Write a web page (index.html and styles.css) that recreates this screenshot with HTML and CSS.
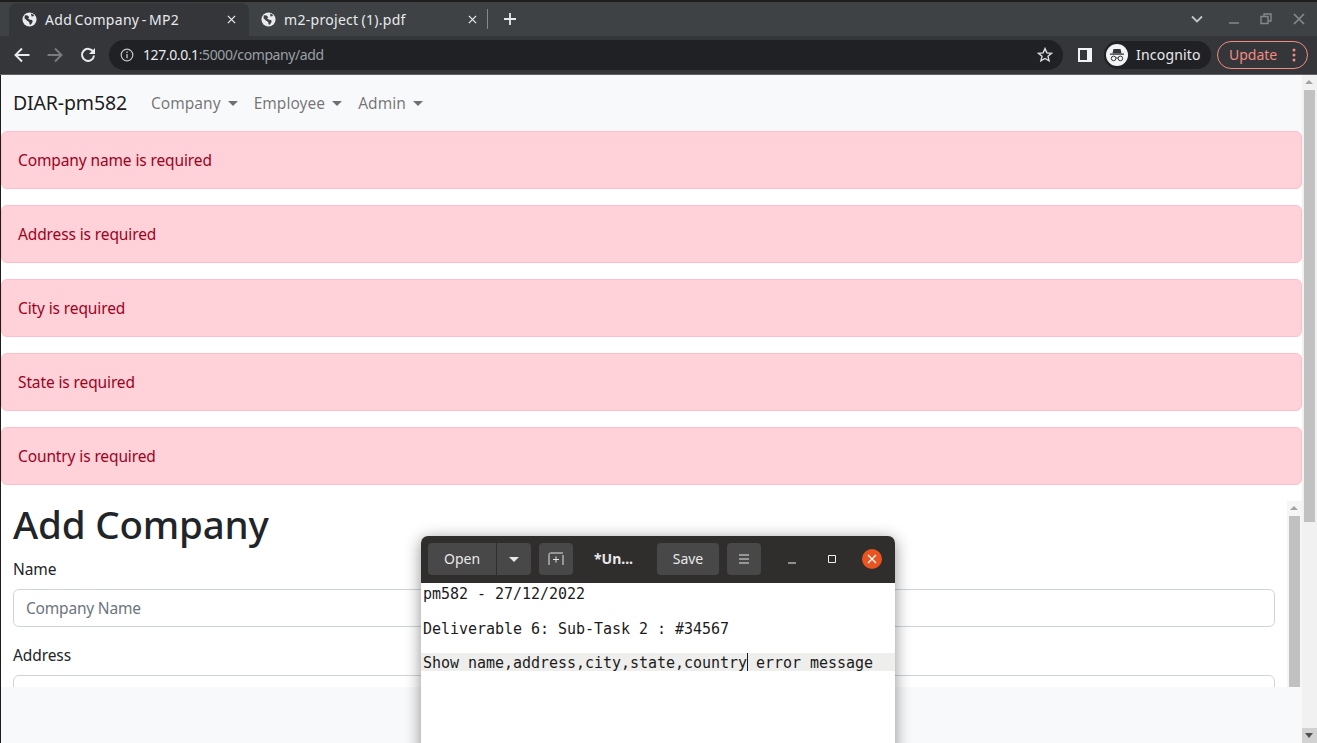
FILE: index.html
```html
<!DOCTYPE html>
<html lang="en">

<head>
  <meta charset="UTF-8">
  <meta name="viewport" content="width=device-width, initial-scale=1.0">
  <title>Add Company - MP2</title>
  <link rel="stylesheet" href="styles.css">
</head>

<body>
  <div class="screen">
    <div class="tabstrip">
      <div class="tab tab-active">
        <svg class="globe" viewBox="0 0 16 16"><circle cx="8" cy="8" r="7.5" fill="#e8eaed"/><path d="M3 3.5l3 .3 1.6 1.5-1 1.6 2 1.3 2.2.2.6 2-2 3.2-1.4-.6-.3-2.4-2.2-1.4-2.8-2.6zM9.5 1.5l3.5 1.6-1 1.4-1.800.2z" fill="#35363a"/></svg>
        <span class="tab-title">Add Company - MP2</span>
        <svg class="tab-close" viewBox="0 0 10 10"><path d="M1 1l8 8M9 1l-8 8" stroke="#e8eaed" stroke-width="1.400"/></svg>
      </div>
      <div class="tab">
        <svg class="globe" viewBox="0 0 16 16"><circle cx="8" cy="8" r="7.5" fill="#e8eaed"/><path d="M3 3.5l3 .3 1.6 1.5-1 1.6 2 1.3 2.2.2.6 2-2 3.2-1.4-.6-.3-2.4-2.2-1.4-2.8-2.6zM9.5 1.5l3.5 1.6-1 1.4-1.800.2z" fill="#3e4245"/></svg>
        <span class="tab-title">m2-project (1).pdf</span>
        <svg class="tab-close" viewBox="0 0 10 10"><path d="M1 1l8 8M9 1l-8 8" stroke="#e8eaed" stroke-width="1.400"/></svg>
      </div>
      <div class="tab-divider"></div>
      <svg class="new-tab" viewBox="0 0 12 12"><path d="M6 0v12M0 6h12" stroke="#e8eaed" stroke-width="1.800"/></svg>
      <div class="window-controls">
        <svg class="win-chevron" viewBox="0 0 12 8"><path d="M1 1.500l5 5 5-5" fill="none" stroke="#c4c7c9" stroke-width="1.800"/></svg>
        <svg class="win-min" viewBox="0 0 12 12"><path d="M1 10h10" stroke="#85888a" stroke-width="1.500"/></svg>
        <svg class="win-restore" viewBox="0 0 12 12"><path d="M4 3V1h7v7H8.500M1 3.500h7v7H1z" fill="none" stroke="#85888a" stroke-width="1.400"/></svg>
        <svg class="win-close" viewBox="0 0 12 12"><path d="M1 1l10 10M11 1L1 11" stroke="#85888a" stroke-width="1.700"/></svg>
      </div>
    </div>

    <div class="toolbar">
      <svg class="tool-icon" viewBox="0 0 16 16"><path d="M15.500 8H2M8 1.500L1.500 8 8 14.500" fill="none" stroke="#e8eaed" stroke-width="1.900"/></svg>
      <svg class="tool-icon" viewBox="0 0 16 16"><path d="M.5 8H14M8 1.500L14.500 8 8 14.500" fill="none" stroke="#797c7f" stroke-width="1.900"/></svg>
      <svg class="tool-icon" viewBox="0 0 16 16"><path d="M13.300 5A6 6 0 1 0 14 8.500" fill="none" stroke="#e8eaed" stroke-width="2"/><path d="M15 1v6H9z" fill="#e8eaed"/></svg>
      <div class="omnibox">
        <svg class="info-icon" viewBox="0 0 14 14"><circle cx="7" cy="7" r="5.800" fill="none" stroke="#c4c7c9" stroke-width="1.200"/><path d="M7 6v4.200M7 3.600v1.300" stroke="#c4c7c9" stroke-width="1.300"/></svg>
        <span class="url"><span class="url-host">127.0.0.1</span>:5000/company/add</span>
        <svg class="star-icon" viewBox="0 0 16 16"><path d="M8 1.600l1.900 4.300 4.600.4-3.500 3 1.100 4.600L8 11.500l-4.100 2.400L5 9.300l-3.500-3 4.600-.4z" fill="none" stroke="#dadce0" stroke-width="1.400"/></svg>
      </div>
      <svg class="panel-icon" viewBox="0 0 14 14"><path d="M0 0h14v14H0z" fill="#f1f3f4"/><path d="M2 2h7v10H2z" fill="#35363a"/></svg>
      <div class="incognito">
        <svg class="incognito-icon" viewBox="0 0 22 22"><circle cx="11" cy="11" r="11" fill="#f1f3f4"/><path d="M7.500 5h7l1 4.200H6.500zM4 9.600h14v1.200H4z" fill="#35363a"/><circle cx="7.600" cy="14.400" r="2.300" fill="none" stroke="#35363a" stroke-width="1"/><circle cx="14.400" cy="14.400" r="2.300" fill="none" stroke="#35363a" stroke-width="1"/><path d="M9.900 14h2.200" stroke="#35363a"/></svg>
        <span class="chip-text">Incognito</span>
      </div>
      <div class="update">
        <span class="chip-text">Update</span>
        <svg class="update-dots" viewBox="0 0 4 14"><circle cx="2" cy="2" r="1.500"/><circle cx="2" cy="7" r="1.500"/><circle cx="2" cy="12" r="1.500"/></svg>
      </div>
    </div>

    <div class="viewport">
      <div class="page">
        <nav class="navbar">
          <span class="brand">DIAR-pm582</span>
          <span class="nav-link">Company<i class="caret"></i></span>
          <span class="nav-link">Employee<i class="caret"></i></span>
          <span class="nav-link">Admin<i class="caret"></i></span>
        </nav>

        <div class="alert">Company name is required</div>
        <div class="alert">Address is required</div>
        <div class="alert">City is required</div>
        <div class="alert">State is required</div>
        <div class="alert">Country is required</div>

        <div class="form-frame">
          <div class="form-body">
            <h1>Add Company</h1>
            <div class="field">
              <label>Name</label>
              <div class="input placeholder">Company Name</div>
            </div>
            <div class="field">
              <label>Address</label>
              <div class="input"></div>
            </div>
          </div>
          <div class="scrollbar inner-scrollbar">
            <div class="arrow arrow-up"></div>
            <div class="thumb thumb-full"></div>
          </div>
        </div>

        <div class="page-footer"></div>
      </div>

      <div class="scrollbar">
        <div class="arrow arrow-up"></div>
        <div class="thumb"></div>
        <div class="track-rest"></div>
        <div class="arrow arrow-down"></div>
      </div>
    </div>

    <div class="gedit">
      <div class="gedit-bar">
        <div class="btn-group">
          <div class="btn btn-open">Open</div>
          <div class="btn btn-drop"><i class="drop-arrow"></i></div>
        </div>
        <div class="btn btn-square">
          <svg class="newdoc-icon" viewBox="0 0 16 14"><path d="M1 13V2.500Q1 1 2.500 1H15M15 3v10M8 4.500v6M5 7.500h6" fill="none" stroke="#e4e4e4" stroke-width="1"/></svg>
        </div>
        <div class="gedit-title">*Un...</div>
        <div class="btn btn-save">Save</div>
        <div class="btn btn-square">
          <svg class="menu-icon" viewBox="0 0 12 10"><path d="M1 1h10M1 5h10M1 9h10" stroke="#e4e4e4" stroke-width="1"/></svg>
        </div>
        <div class="gedit-controls">
          <svg class="g-min" viewBox="0 0 10 10"><path d="M1 9h8" stroke="#f0f0f0" stroke-width="1"/></svg>
          <svg class="g-max" viewBox="0 0 10 10"><path d="M1.500 1.500h7v7h-7z" fill="none" stroke="#f0f0f0" stroke-width="1"/></svg>
          <div class="g-close"><svg viewBox="0 0 10 10"><path d="M1 1l8 8M9 1l-8 8" stroke="#fff" stroke-width="1.300"/></svg></div>
        </div>
      </div>
      <div class="gedit-text">
        <div class="line">pm582 - 27/12/2022</div>
        <div class="line"></div>
        <div class="line">Deliverable 6: Sub-Task 2 : #34567</div>
        <div class="line"></div>
        <div class="line line-current">Show name,address,city,state,country<span class="text-caret"></span> error message</div>
      </div>
    </div>
  </div>
</body>

</html>
```

FILE: styles.css
```css
* {
  box-sizing: border-box;
}

html,
body {
  margin: 0;
  height: 100%;
  overflow: hidden;
}

body {
  background-color: #fff;
  font-family: "Noto Sans", sans-serif;
}

.screen {
  position: relative;
  width: 1317px;
  height: 743px;
  display: flex;
  flex-direction: column;
  overflow: hidden;
  background-color: #1d1d1d;
}

/* tab strip */

.tabstrip {
  height: 34px;
  margin-top: 2px;
  flex: none;
  display: flex;
  align-items: center;
  padding-left: 9px;
  background-color: #3e4245;
  color: #e8eaed;
  font-size: 14px;
  letter-spacing: 0.3px;
  word-spacing: -1px;
}

.tab {
  width: 239px;
  height: 33px;
  display: flex;
  align-items: center;
  padding: 0 9px 0 12px;
  align-self: flex-end;
  border-radius: 8px 8px 0 0;
}

.tab-active {
  width: 240px;
  padding: 0 11px 0 13px;
  word-spacing: -1.5px;
  background-color: #35363a;
}

.globe {
  width: 15px;
  height: 15px;
  flex: none;
}

.tab-title {
  margin-left: 8px;
  flex: 1;
  white-space: nowrap;
}

.tab-close {
  width: 9px;
  height: 9px;
  flex: none;
  margin-right: 2px;
}

.tab-divider {
  width: 1px;
  height: 20px;
  margin-left: -1px;
  background-color: #86898c;
}

.new-tab {
  width: 12px;
  height: 12px;
  margin-left: 16px;
}

.window-controls {
  margin-left: auto;
  display: flex;
  align-items: center;
  padding-right: 12px;
}

.win-chevron {
  width: 12px;
  height: 8px;
}

.win-min,
.win-restore,
.win-close {
  width: 12px;
  height: 12px;
}

.win-min {
  margin-left: 25px;
}

.win-restore {
  margin-left: 20px;
}

.win-close {
  margin-left: 21px;
}

/* toolbar */

.toolbar {
  height: 39px;
  flex: none;
  display: flex;
  align-items: center;
  padding: 0 9px 0 14px;
  background-color: #35363a;
  border-bottom: 1px solid #5f6368;
  color: #e8eaed;
}

.tool-icon {
  width: 16px;
  height: 16px;
  margin-right: 17px;
  flex: none;
}

.omnibox {
  width: 954px;
  height: 30px;
  margin-left: -4px;
  display: flex;
  align-items: center;
  padding: 0 10px 0 11px;
  border-radius: 15px;
  background-color: #202124;
  font-size: 14px;
}

.info-icon {
  width: 14px;
  height: 14px;
}

.url {
  margin-left: 9px;
  padding-bottom: 2px;
  color: #9aa0a6;
  letter-spacing: -0.4px;
  white-space: nowrap;
}

.url-host {
  color: #e8eaed;
}

.star-icon {
  width: 16px;
  height: 16px;
  margin-left: auto;
}

.panel-icon {
  width: 14px;
  height: 14px;
  margin-left: 15px;
  flex: none;
}

.incognito {
  width: 107px;
  height: 28px;
  margin-left: 12px;
  display: flex;
  align-items: center;
  gap: 8px;
  padding-left: 2px;
  border-radius: 14px;
  background-color: #202124;
  font-size: 14px;
  letter-spacing: 0.2px;
}

.incognito-icon {
  width: 22px;
  height: 22px;
}

.chip-text {
  padding-bottom: 2px;
}

.update {
  width: 91px;
  height: 28px;
  margin-left: 6px;
  display: flex;
  align-items: center;
  padding: 0 10px 0 11px;
  border: 1px solid #f28b82;
  border-radius: 14px;
  color: #f28b82;
  font-size: 14px;
}

.update-dots {
  width: 4px;
  height: 14px;
  margin-left: auto;
  margin-right: 1px;
  fill: #f28b82;
}

/* page */

.viewport {
  flex: 1;
  min-height: 0;
  display: flex;
  padding-left: 1px;
}

.page {
  flex: 1;
  min-width: 0;
  display: flex;
  flex-direction: column;
  background-color: #fff;
  color: #212529;
  font-size: 15.5px;
  letter-spacing: -0.2px;
  line-height: 24px;
}

.navbar {
  height: 56px;
  flex: none;
  display: flex;
  align-items: center;
  padding: 0 12px;
  background-color: #f8f9fa;
}

.brand {
  margin-right: 16px;
  font-size: 19.5px;
  letter-spacing: -0.15px;
  color: rgba(0, 0, 0, 0.9);
}

.nav-link {
  display: flex;
  align-items: center;
  padding: 0 8px;
  letter-spacing: 0.05px;
  color: rgba(0, 0, 0, 0.55);
}

.caret {
  margin-left: 7px;
  border-top: 5px solid rgba(0, 0, 0, 0.55);
  border-left: 5px solid transparent;
  border-right: 5px solid transparent;
}

.alert {
  height: 58px;
  flex: none;
  margin-bottom: 16px;
  padding: 16px;
  background-color: #ffd1d8;
  border: 1px solid #ffbfc9;
  border-radius: 6px;
  letter-spacing: -0.12px;
  color: #a0001c;
}

/* the footer paints over whatever runs past the bottom of this frame */
.form-frame {
  flex: 1;
  min-height: 0;
  display: flex;
}

.form-body {
  flex: 1;
  min-width: 0;
  padding: 0 12px;
}

h1 {
  margin: 0 0 10px;
  font-size: 38.5px;
  font-weight: 500;
  letter-spacing: -0.2px;
  line-height: 46px;
}

.field {
  margin-bottom: 16px;
}

label {
  display: block;
  margin-bottom: 8px;
  letter-spacing: -0.1px;
}

.input {
  height: 38px;
  padding: 6px 12px;
  background-color: #fff;
  border: 1px solid #ced4da;
  border-radius: 6px;
}

.placeholder {
  color: #6c757d;
}

.page-footer {
  height: 56px;
  flex: none;
  background-color: #f8f9fa;
}

/* scrollbars */

.scrollbar {
  width: 15px;
  flex: none;
  display: flex;
  flex-direction: column;
  align-items: center;
  background-color: #f1f1f1;
}

.arrow {
  width: 15px;
  height: 15px;
  flex: none;
  position: relative;
}

.arrow::after {
  content: "";
  position: absolute;
  left: 3px;
  top: 5px;
  border-left: 4px solid transparent;
  border-right: 4px solid transparent;
}

.arrow-up::after {
  border-bottom: 4px solid #a3a3a3;
}

.arrow-down {
  background-color: #d2d2d2;
}

.arrow-down::after {
  border-top: 5px solid #505050;
}

.thumb {
  width: 11px;
  height: 432px;
  flex: none;
  background-color: #c1c1c1;
}

.thumb-full {
  flex: 1;
}

.track-rest {
  flex: 1;
}

.inner-scrollbar {
  background-color: #f6f6f6;
}

/* text editor window */

.gedit {
  position: absolute;
  left: 421px;
  top: 536px;
  width: 474px;
  height: 240px;
  display: flex;
  flex-direction: column;
  border-radius: 7px 7px 0 0;
  background-color: #fff;
  box-shadow: 0 3px 16px rgba(0, 0, 0, 0.45);
  overflow: hidden;
}

.gedit-bar {
  height: 47px;
  flex: none;
  display: flex;
  align-items: center;
  padding: 0 7px 1px;
  background-color: #2f2e2d;
  color: #e8e8e8;
  font-size: 14px;
}

.btn-group {
  display: flex;
  gap: 1px;
}

.btn {
  height: 32px;
  display: flex;
  align-items: center;
  justify-content: center;
  background-color: #484848;
  border-radius: 4px;
}

.btn-open {
  width: 68px;
  padding-bottom: 2px;
  border-radius: 4px 0 0 4px;
}

.btn-drop {
  width: 34px;
  border-radius: 0 4px 4px 0;
}

.drop-arrow {
  border-top: 5px solid #e8e8e8;
  border-left: 5px solid transparent;
  border-right: 5px solid transparent;
}

.btn-square {
  width: 34px;
  margin-left: 8px;
}

.newdoc-icon {
  width: 16px;
  height: 14px;
}

.menu-icon {
  width: 12px;
  height: 10px;
}

.gedit-title {
  width: 84px;
  padding: 0 3px 2px 0;
  text-align: center;
  font-weight: 700;
  white-space: nowrap;
}

.btn-save {
  width: 62px;
  padding-bottom: 2px;
}

.gedit-controls {
  display: flex;
  align-items: center;
  margin-left: 26px;
}

.g-min,
.g-max {
  width: 10px;
  height: 10px;
}

.g-max {
  margin-left: 30px;
}

.g-close {
  width: 20px;
  height: 20px;
  margin-left: 25px;
  display: flex;
  align-items: center;
  justify-content: center;
  border-radius: 50%;
  background-color: #e95420;
}

.g-close svg {
  width: 10px;
  height: 10px;
}

.gedit-text {
  padding-top: 1px;
  font-family: "DejaVu Sans Mono", monospace;
  font-size: 15px;
  letter-spacing: -0.03px;
  color: #1b1b1b;
}

.line {
  height: 17.5px;
  line-height: 20px;
  padding-left: 2px;
  white-space: pre;
}

.line-current {
  height: 18px;
  margin-top: -1px;
  background-color: #eeeeec;
}

.text-caret {
  display: inline-block;
  width: 1px;
  height: 18px;
  margin-right: -1px;
  vertical-align: top;
  background-color: #1b1b1b;
}
```
